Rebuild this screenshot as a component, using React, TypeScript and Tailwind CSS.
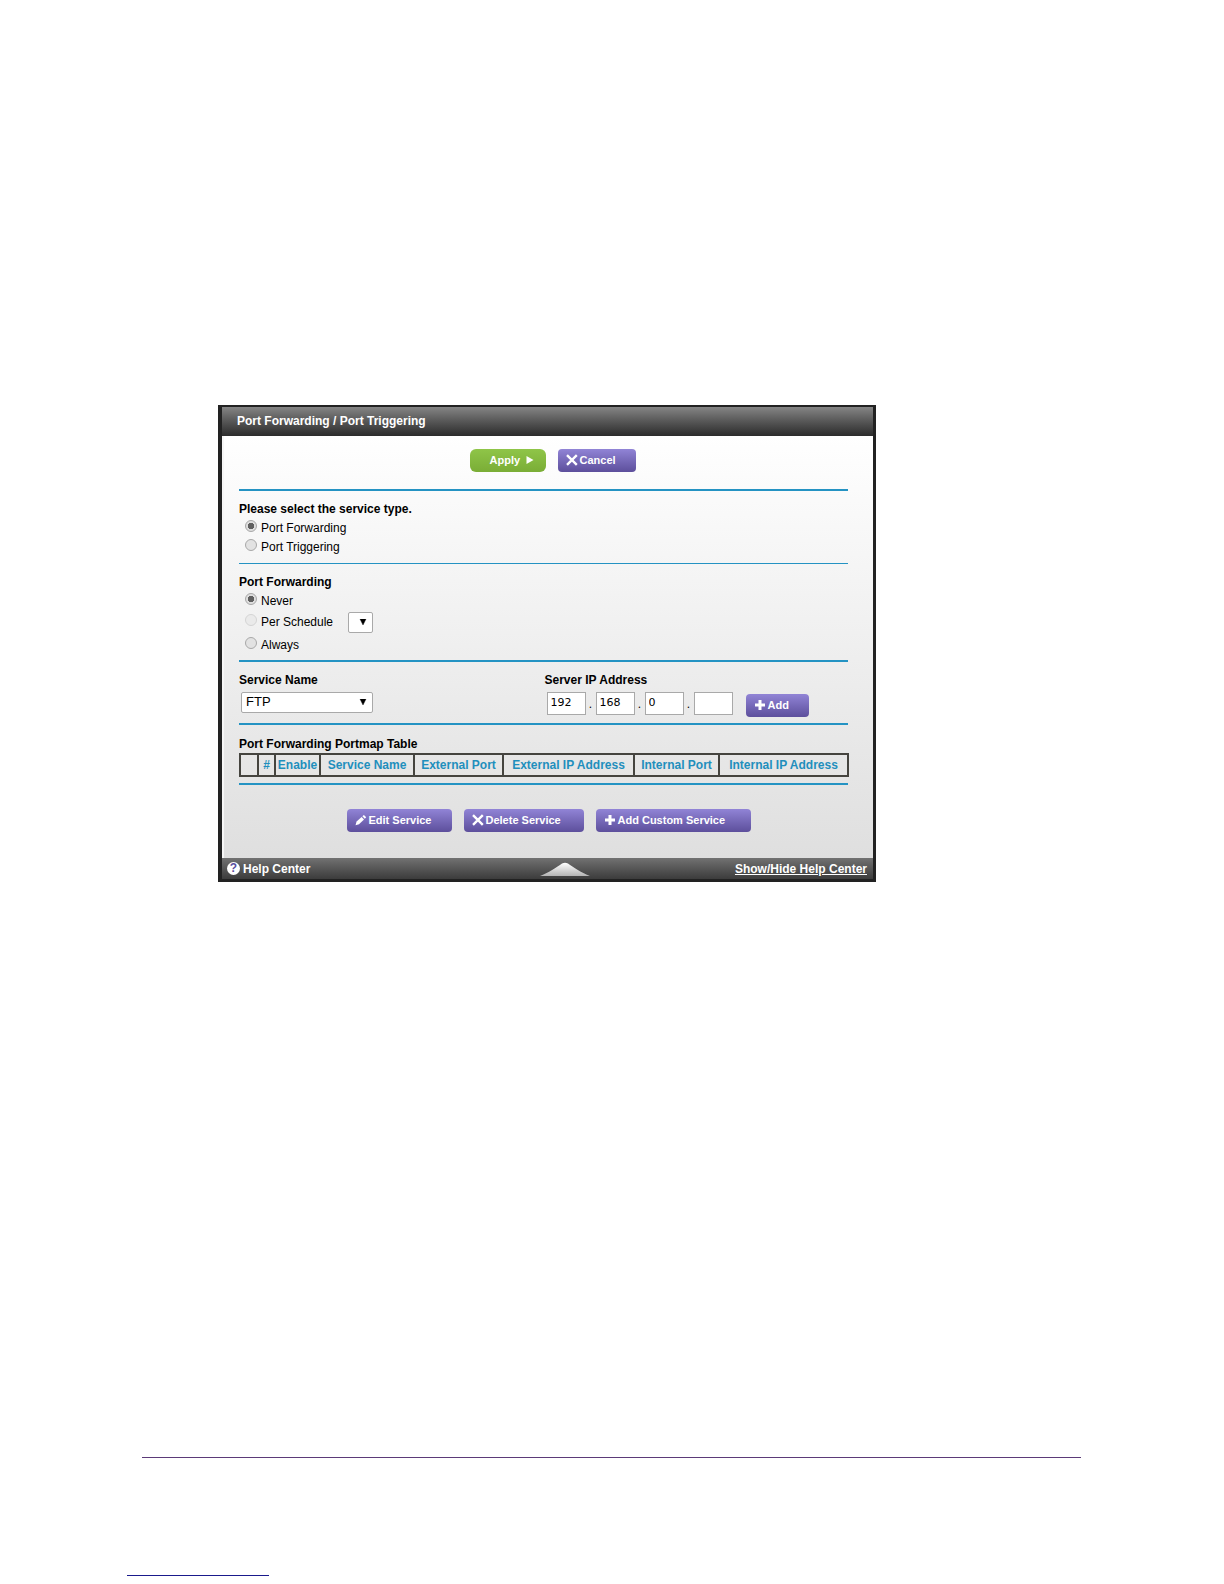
import { useState, type ReactNode } from "react";

const COLUMNS = [
  { label: "", width: "w-[18px]" },
  { label: "#", width: "w-[17px]" },
  { label: "Enable", width: "w-[45px]" },
  { label: "Service Name", width: "w-[94px]" },
  { label: "External Port", width: "w-[89px]" },
  { label: "External IP Address", width: "w-[131px]" },
  { label: "Internal Port", width: "w-[85px]" },
  { label: "Internal IP Address", width: "w-[129px]" },
];

function CrossIcon() {
  return (
    <svg viewBox="0 0 12 12" className="w-3 h-3 shrink-0" aria-hidden>
      <path d="M1 1.2 10.8 10.8M10.8 1.2 1 10.8" stroke="white" strokeWidth={2.4} fill="none" />
    </svg>
  );
}

function PlusIcon() {
  return (
    <svg viewBox="0 0 12 12" className="w-3 h-3 shrink-0" aria-hidden>
      <path d="M6 1V11M1 6H11" stroke="white" strokeWidth={3} fill="none" />
    </svg>
  );
}

function PencilIcon() {
  return (
    <svg viewBox="0 0 12 12" className="w-3 h-3 shrink-0" aria-hidden>
      <path d="M0.5 11.2 1.6 7.6 6.6 3 9 5.4 4 10.2Z" fill="white" />
      <path d="M7.4 2.3 8.9 1 11.2 3.3 9.8 4.7Z" fill="white" />
    </svg>
  );
}

function PurpleButton({ icon, width, children }: { icon: ReactNode; width: string; children: ReactNode }) {
  return (
    <button
      type="button"
      className={`${width} h-[23px] pl-2 pb-0.5 flex items-center gap-0.5 rounded bg-linear-to-b from-[#9184d6] to-[#5d4f9c] text-[11px] leading-4 font-bold text-white whitespace-nowrap`}
    >
      {icon}
      {children}
    </button>
  );
}

function Rule({ thin }: { thin?: boolean }) {
  return <hr className={`border-0 bg-[#2493c3] ${thin ? "h-px" : "h-[2px]"}`} />;
}

type RadioProps = {
  name: string;
  label: string;
  checked: boolean;
  disabled?: boolean;
  onChange: () => void;
};

function Radio({ name, label, checked, disabled, onChange }: RadioProps) {
  return (
    <label className="flex items-center gap-1 pl-1.5">
      <input
        type="radio"
        name={name}
        checked={checked}
        disabled={disabled}
        onChange={onChange}
        className="appearance-none mb-1 w-3 h-3 rounded-full border border-[#a8a8a8] bg-[#e2e2e2] disabled:opacity-40 checked:bg-[radial-gradient(circle,#606060_0_3px,#dedede_3px)]"
      />
      {label}
    </label>
  );
}

function Caret() {
  return (
    <svg viewBox="0 0 8 6" className="pointer-events-none absolute right-1.5 top-[7px] w-[8px] h-[6px]" aria-hidden>
      <path d="M1 0H7L4 6Z" fill="black" stroke="black" strokeWidth={0.4} />
    </svg>
  );
}

export default function App() {
  const [type, setType] = useState("forwarding");
  const [mode, setMode] = useState("never");
  const [ip, setIp] = useState(["192", "168", "0", ""]);

  return (
    <main className="min-h-screen bg-white pt-[405px] font-['Liberation_Sans',Arial,sans-serif] text-[12px] leading-[18px] text-black">
      <div className="ml-[218px] mr-4 max-w-[658px] border-l-4 border-t-2 border-r-[3px] border-b-[3px] border-[#222222]">
        <header className="h-[29px] pl-[15px] flex items-center bg-linear-to-b from-[#858585] to-[#2c2c2c]">
          <h1 className="pb-0.5 font-bold text-white">Port Forwarding / Port Triggering</h1>
        </header>

        <form
          onSubmit={(e) => e.preventDefault()}
          className="pl-[17px] pr-[25px] pt-[13px] pb-[26px] bg-linear-to-b from-white to-[#dfdfdf] shadow-[inset_2px_0_#f6f6f6]"
        >
          <div className="flex justify-center gap-3 pl-[18px] pb-[17px]">
            <button
              type="submit"
              className="w-[76px] h-[23px] pl-5 pb-0.5 flex items-center gap-1.5 rounded-md bg-linear-to-b from-[#8fc548] to-[#7aad36] text-[11px] leading-4 font-bold text-white"
            >
              Apply
              <svg viewBox="0 0 8 8" className="w-2 h-2" aria-hidden>
                <path d="M0.5 0 7.5 4 0.5 8Z" fill="white" />
              </svg>
            </button>
            <PurpleButton icon={<CrossIcon />} width="w-[78px]">
              Cancel
            </PurpleButton>
          </div>

          <Rule />
          <fieldset className="pt-[9px] pb-[7px]">
            <legend className="float-left w-full font-bold">Please select the service type.</legend>
            <div className="clear-both grid auto-rows-[19px]">
              <Radio
                name="type"
                label="Port Forwarding"
                checked={type === "forwarding"}
                onChange={() => setType("forwarding")}
              />
              <Radio
                name="type"
                label="Port Triggering"
                checked={type === "triggering"}
                onChange={() => setType("triggering")}
              />
            </div>
          </fieldset>

          <Rule thin />
          <fieldset className="pt-[9px] pb-[3px]">
            <legend className="float-left w-full font-bold">Port Forwarding</legend>
            <div className="clear-both">
              <div className="h-5 flex items-center">
                <Radio name="mode" label="Never" checked={mode === "never"} onChange={() => setMode("never")} />
              </div>
              <div className="h-[22px] flex items-center gap-[15px]">
                <Radio
                  name="mode"
                  label="Per Schedule"
                  disabled
                  checked={mode === "schedule"}
                  onChange={() => setMode("schedule")}
                />
                <div className="relative">
                  <select
                    aria-label="Schedule"
                    className="block appearance-none w-[25px] h-[21px] rounded-xs border border-[#a9a9a9] bg-white"
                  >
                    <option value="" />
                  </select>
                  <Caret />
                </div>
              </div>
              <div className="h-6 flex items-center">
                <Radio name="mode" label="Always" checked={mode === "always"} onChange={() => setMode("always")} />
              </div>
            </div>
          </fieldset>

          <Rule />
          <div className="grid grid-cols-2 pt-[9px] pb-2">
            <div>
              <label htmlFor="service" className="font-bold">
                Service Name
              </label>
              <div className="relative mt-[3px] ml-0.5 w-[132px]">
                <select
                  id="service"
                  className="block appearance-none w-full h-[21px] pl-1 pb-px rounded-xs border border-[#a9a9a9] bg-white text-[13px] leading-[18px]"
                >
                  <option>FTP</option>
                  <option>HTTP</option>
                </select>
                <Caret />
              </div>
            </div>
            <div>
              <span id="server-ip" className="pl-px font-bold">
                Server IP Address
              </span>
              <div role="group" aria-labelledby="server-ip" className="mt-[3px] pl-[3px] flex items-end">
                {ip.map((part, i) => (
                  <div key={i} className="flex items-center">
                    {i > 0 && <span className="w-[10px] text-center">.</span>}
                    <input
                      type="text"
                      maxLength={3}
                      aria-label={`Server IP Address part ${i + 1}`}
                      value={part}
                      onChange={(e) => setIp(ip.map((p, j) => (j === i ? e.target.value : p)))}
                      className="w-[39px] h-[23px] pl-[3px] pb-0.5 border border-[#a9a9a9] bg-white font-['DejaVu_Sans',Verdana,sans-serif] text-[11px]"
                    />
                  </div>
                ))}
                <div className="ml-[13px] self-start pt-0.5 -mb-0.5">
                  <PurpleButton icon={<PlusIcon />} width="w-[63px]">
                    Add
                  </PurpleButton>
                </div>
              </div>
            </div>
          </div>

          <Rule />
          <table className="mt-[10px] mb-1.5 w-full table-fixed border-collapse">
            <caption className="caption-top text-left font-bold">Port Forwarding Portmap Table</caption>
            <thead>
              <tr>
                {COLUMNS.map((col) => (
                  <th
                    key={col.label}
                    scope="col"
                    className={`${col.width} h-[22px] p-0 border-2 border-[#45443f] text-center font-bold leading-5 text-[#1f8fbd] whitespace-nowrap`}
                  >
                    {col.label}
                  </th>
                ))}
              </tr>
            </thead>
          </table>
          <Rule />

          <div className="mt-6 pl-[10px] flex justify-center gap-3">
            <PurpleButton icon={<PencilIcon />} width="w-[105px]">
              Edit Service
            </PurpleButton>
            <PurpleButton icon={<CrossIcon />} width="w-[120px]">
              Delete Service
            </PurpleButton>
            <PurpleButton icon={<PlusIcon />} width="w-[155px]">
              Add Custom Service
            </PurpleButton>
          </div>
        </form>

        <footer className="h-[21px] pl-[5px] pr-1.5 grid grid-cols-3 items-center bg-linear-to-b from-[#727272] to-[#3c3c3c] font-bold text-white">
          <a href="#help" className="flex items-center gap-[3px]">
            <span className="w-[13px] h-[13px] rounded-full bg-white text-center text-[12px] leading-[13px] text-[#5a4fa0]">
              ?
            </span>
            Help Center
          </a>
          <svg viewBox="0 0 50 14" className="w-[50px] h-[14px] self-end mb-[3px] ml-auto mr-16" aria-hidden>
            <defs>
              <linearGradient id="handle" x1="0" y1="0" x2="0" y2="1">
                <stop offset="0" stopColor="#ffffff" />
                <stop offset="1" stopColor="#b4b4b4" />
              </linearGradient>
            </defs>
            <path d="M0 14 C8 11 17 5 22 1.5 Q25 0 28 1.5 C33 5 42 11 50 14Z" fill="url(#handle)" />
          </svg>
          <a href="#toggle-help" className="text-right underline">
            Show/Hide Help Center
          </a>
        </footer>
      </div>

      <hr className="mt-[575px] ml-[142px] mr-[143px] h-px border-0 bg-[#5b3a78]" />
      <hr className="mt-[117px] ml-[127px] w-[142px] h-px border-0 bg-[#1a1a8c]" />
    </main>
  );
}
